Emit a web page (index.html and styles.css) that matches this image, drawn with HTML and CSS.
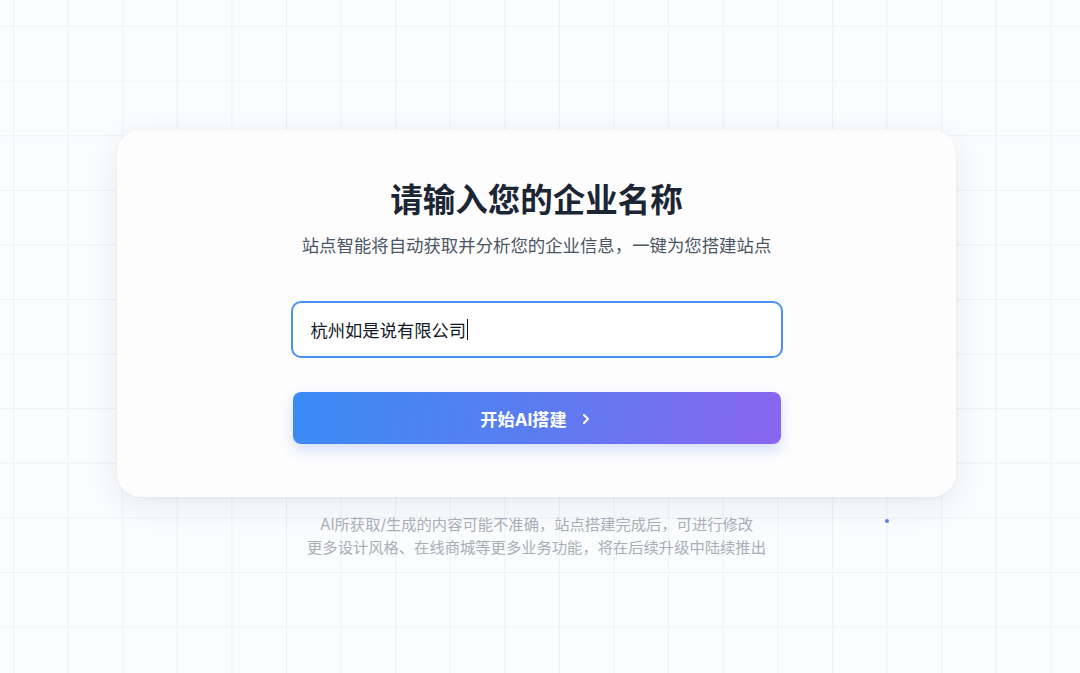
FILE: index.html
```html
<!DOCTYPE html>
<html lang="zh-CN">
<head>
    <meta charset="UTF-8">
    <title>AI建站</title>
    <link rel="stylesheet" href="styles.css">
</head>
<body>
    <span class="dot"></span>

    <div class="page">
        <div class="card">
            <h1 class="title">请输入您的企业名称</h1>
            <p class="subtitle">站点智能将自动获取并分析您的企业信息，一键为您搭建站点</p>

            <div class="field">
                <span class="field-text">杭州如是说有限公司</span><span class="caret"></span>
            </div>

            <button class="start-btn">
                <span>开始AI搭建</span>
                <svg width="14" height="14" viewBox="0 0 14 14" fill="none">
                    <path d="M5 3l4 4-4 4" stroke="#fff" stroke-width="2" stroke-linecap="round" stroke-linejoin="round"/>
                </svg>
            </button>
        </div>

        <div class="notes">
            <p>AI所获取/生成的内容可能不准确，站点搭建完成后，可进行修改</p>
            <p>更多设计风格、在线商城等更多业务功能，将在后续升级中陆续推出</p>
        </div>
    </div>
</body>
</html>
```

FILE: styles.css
```css
body {
    margin: 0;
    height: 673px;
    overflow: hidden;
    font-family: "Inter", "Noto Sans CJK SC", sans-serif;
    background-color: #fbfcfe;
    background-image:
        linear-gradient(to right, #edf1f8 1px, transparent 1px),
        linear-gradient(to bottom, #edf1f8 1px, transparent 1px);
    background-size: 54.6px 54.6px;
    background-position: 13px 26px;
}

.page {
    display: flex;
    flex-direction: column;
    align-items: center;
    padding-top: 130px;
    padding-right: 7px;
}

.card {
    width: 839px;
    height: 367px;
    box-sizing: border-box;
    background: #fdfdfe;
    border-radius: 24px;
    box-shadow: 0 8px 30px rgba(30, 50, 90, 0.09), 0 1px 3px rgba(30, 50, 90, 0.04);
    display: flex;
    flex-direction: column;
    align-items: center;
    padding-top: 50px;
}

.title {
    margin: 0;
    font-size: 32.5px;
    line-height: 42px;
    font-weight: 700;
    color: #1c2533;
}

.subtitle {
    margin: 12px 0 0;
    font-size: 17.4px;
    line-height: 24px;
    color: #4b5563;
}

.field {
    margin-top: 43px;
    width: 492px;
    height: 57px;
    box-sizing: border-box;
    border: 2px solid #4a90f0;
    border-radius: 10px;
    background: #fff;
    display: flex;
    align-items: center;
    padding-left: 18px;
}

.field-text {
    font-size: 17.3px;
    color: #111827;
}

.caret {
    width: 1px;
    height: 21px;
    background: #111;
    margin-left: 1px;
}

.start-btn {
    margin-top: 34px;
    width: 488px;
    height: 52px;
    border: none;
    border-radius: 8px;
    background: linear-gradient(100deg, #3a8bf4 0%, #5b7cf1 50%, #8a66ef 100%);
    box-shadow: 0 6px 14px rgba(70, 110, 230, 0.22);
    color: #fff;
    font-family: inherit;
    font-size: 17.2px;
    font-weight: 700;
    display: flex;
    align-items: center;
    justify-content: center;
    gap: 12px;
    padding: 0;
    cursor: pointer;
}

.start-btn svg {
    margin-top: 1px;
}

.notes {
    margin-top: 16px;
    text-align: center;
    font-size: 15.3px;
    line-height: 23px;
    color: #a9aeb7;
}

.notes p {
    margin: 0;
}

.dot {
    position: absolute;
    left: 885px;
    top: 519px;
    width: 4px;
    height: 4px;
    border-radius: 50%;
    background: #5b7ff0;
}
```
